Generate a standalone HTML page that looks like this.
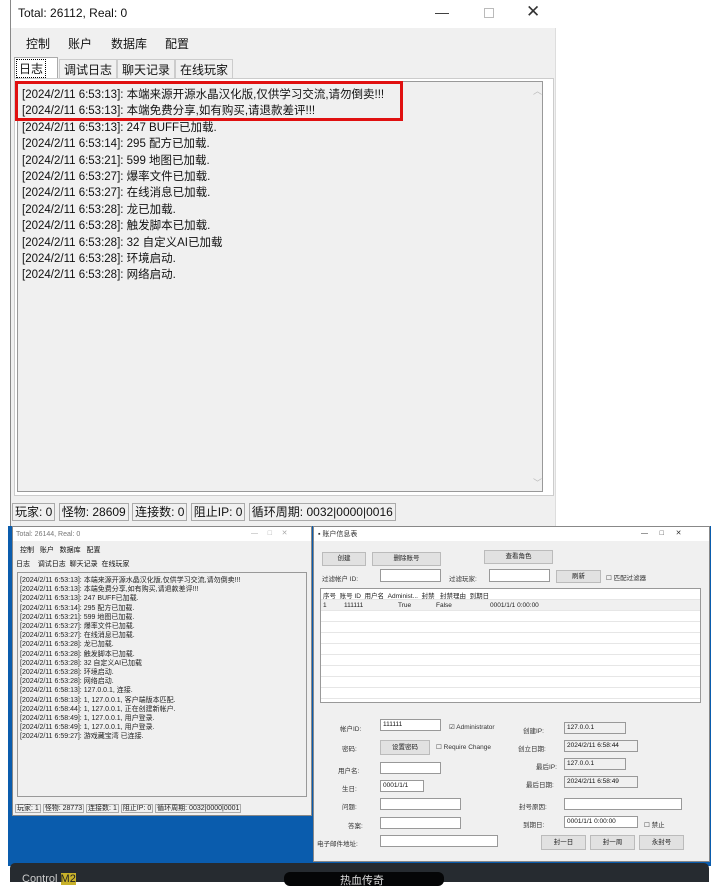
<!DOCTYPE html>
<html><head><meta charset="utf-8"><style>
*{margin:0;padding:0;box-sizing:border-box}
body{width:724px;height:882px;background:#fff;position:relative;overflow:hidden;font-family:"Liberation Sans","Noto Sans CJK SC",sans-serif;color:#111}
.a{position:absolute}
.log{font-size:11.5px;line-height:16.4px;white-space:nowrap}
.s{font-size:7px;line-height:9.2px;white-space:nowrap}
.box{position:absolute;background:#fff;border:1px solid #aaa}
.btn{position:absolute;background:#e1e1e1;border:1px solid #bbb;font-size:6.5px;text-align:center;color:#222}
.lbl{position:absolute;font-size:6.5px;color:#333;white-space:nowrap}
.inp{position:absolute;background:#fff;border:1px solid #999;font-size:6.5px;padding-left:2px;line-height:10px}
.ro{background:#f0f0f0}
</style></head><body>
<div class="a" style="left:10px;top:0;width:546px;height:526px;background:#f0f0f0;border-left:1px solid #888;border-right:1px solid #ddd">
 <div class="a" style="left:0;top:0;width:545px;height:28px;background:#fff"></div>
 <div class="a" style="left:7px;top:6px;font-size:12px">Total: 26112, Real: 0</div>
 <div class="a" style="left:424px;top:4px;font-size:14px;color:#333">—</div>
 <div class="a" style="left:473px;top:8px;width:10px;height:10px;border:1px solid #bbb"></div>
 <div class="a" style="left:515px;top:2px;font-size:17px;color:#333">✕</div>
 <div class="a" style="left:15px;top:35px;font-size:12px">控制</div>
 <div class="a" style="left:57px;top:35px;font-size:12px">账户</div>
 <div class="a" style="left:100px;top:35px;font-size:12px">数据库</div>
 <div class="a" style="left:154px;top:35px;font-size:12px">配置</div>
 <div class="a" style="left:3px;top:57px;width:44px;height:21px;background:#fff;border:1px solid #aaa;border-bottom:none"></div>
 <div class="a" style="left:5px;top:59px;font-size:12px;border:1px dotted #000;padding:0 2px">日志</div>
 <div class="a" style="left:48px;top:59px;height:20px;border:1px solid #ccc;font-size:12px;padding:1px 4px">调试日志</div>
 <div class="a" style="left:106px;top:59px;height:20px;border:1px solid #ccc;font-size:12px;padding:1px 4px">聊天记录</div>
 <div class="a" style="left:164px;top:59px;height:20px;border:1px solid #ccc;font-size:12px;padding:1px 4px">在线玩家</div>
 <div class="a" style="left:3px;top:78px;width:540px;height:418px;background:#fff;border:1px solid #ccc"></div>
 <div class="a" style="left:6px;top:81px;width:526px;height:411px;background:#f0f0f0;border:1px solid #999"></div>
 <div class="a" style="left:522px;top:84px;font-size:9px;color:#bbb">︿</div>
 <div class="a" style="left:522px;top:476px;font-size:9px;color:#bbb">﹀</div>
 <div class="a log" style="left:11px;top:87px">[2024/2/11 6:53:13]: 本端来源开源水晶汉化版,仅供学习交流,请勿倒卖!!!<br>[2024/2/11 6:53:13]: 本端免费分享,如有购买,请退款差评!!!<br>[2024/2/11 6:53:13]: 247 BUFF已加载.<br>[2024/2/11 6:53:14]: 295 配方已加载.<br>[2024/2/11 6:53:21]: 599 地图已加载.<br>[2024/2/11 6:53:27]: 爆率文件已加载.<br>[2024/2/11 6:53:27]: 在线消息已加载.<br>[2024/2/11 6:53:28]: 龙已加载.<br>[2024/2/11 6:53:28]: 触发脚本已加载.<br>[2024/2/11 6:53:28]: 32 自定义AI已加载<br>[2024/2/11 6:53:28]: 环境启动.<br>[2024/2/11 6:53:28]: 网络启动.</div>
 <div class="a" style="left:4px;top:81px;width:388px;height:40px;border:3px solid #e01010"></div>
 <div class="a" style="left:1px;top:503px;font-size:12px;white-space:nowrap">
  <span style="border:1px solid #aaa;padding:1px 2px">玩家: 0</span> <span style="border:1px solid #aaa;padding:1px 2px">怪物: 28609</span> <span style="border:1px solid #aaa;padding:1px 2px">连接数: 0</span> <span style="border:1px solid #aaa;padding:1px 2px">阻止IP: 0</span> <span style="border:1px solid #aaa;padding:1px 2px">循环周期: 0032|0000|0016</span></div>
</div>
<div class="a" style="left:8px;top:526px;width:703px;height:340px;background:#0a5cad"></div>
<div class="a" style="left:10px;top:863px;width:699px;height:19px;background:#262b30;border-radius:5px 5px 0 0"></div>
<div class="a" style="left:284px;top:872px;width:160px;height:14px;background:#050607;border-radius:6px"></div>
<div class="a" style="left:340px;top:872px;font-size:11px;color:#ddd">热血传奇</div>
<div class="a" style="left:22px;top:873px;font-size:11px;color:#ccc">Control <span style="background:#c9b22a;color:#222">M2</span></div>
<div class="a" style="left:12px;top:526px;width:300px;height:290px;background:#f0f0f0;border:1px solid #888">
 <div class="a" style="left:0;top:0;width:298px;height:14px;background:#fff"></div>
 <div class="a s" style="left:3px;top:3px;color:#777">Total: 26144, Real: 0</div>
 <div class="a s" style="left:238px;top:2px;color:#aaa">—&nbsp;&nbsp;&nbsp;&nbsp;&nbsp;□&nbsp;&nbsp;&nbsp;&nbsp;&nbsp;✕</div>
 <div class="a s" style="left:7px;top:19px">控制&nbsp;&nbsp;&nbsp;账户&nbsp;&nbsp;&nbsp;数据库&nbsp;&nbsp;&nbsp;配置</div>
 <div class="a s" style="left:3px;top:33px">日志&nbsp;&nbsp;&nbsp;&nbsp;调试日志&nbsp;&nbsp;聊天记录&nbsp;&nbsp;在线玩家</div>
 <div class="a" style="left:4px;top:45px;width:290px;height:225px;background:#f0f0f0;border:1px solid #999"></div>
 <div class="a s" style="left:7px;top:49px;color:#222">[2024/2/11 6:53:13]: 本端来源开源水晶汉化版,仅供学习交流,请勿倒卖!!!<br>[2024/2/11 6:53:13]: 本端免费分享,如有购买,请退款差评!!!<br>[2024/2/11 6:53:13]: 247 BUFF已加载.<br>[2024/2/11 6:53:14]: 295 配方已加载.<br>[2024/2/11 6:53:21]: 599 地图已加载.<br>[2024/2/11 6:53:27]: 爆率文件已加载.<br>[2024/2/11 6:53:27]: 在线消息已加载.<br>[2024/2/11 6:53:28]: 龙已加载.<br>[2024/2/11 6:53:28]: 触发脚本已加载.<br>[2024/2/11 6:53:28]: 32 自定义AI已加载<br>[2024/2/11 6:53:28]: 环境启动.<br>[2024/2/11 6:53:28]: 网络启动.<br>[2024/2/11 6:58:13]: 127.0.0.1, 连接.<br>[2024/2/11 6:58:13]: 1, 127.0.0.1, 客户端版本匹配.<br>[2024/2/11 6:58:44]: 1, 127.0.0.1, 正在创建新帐户.<br>[2024/2/11 6:58:49]: 1, 127.0.0.1, 用户登录.<br>[2024/2/11 6:58:49]: 1, 127.0.0.1, 用户登录.<br>[2024/2/11 6:59:27]: 游戏藏宝湾 已连接.</div>
 <div class="a s" style="left:2px;top:277px;color:#222"><span style="border:1px solid #aaa;padding:0 1px">玩家: 1</span> <span style="border:1px solid #aaa;padding:0 1px">怪物: 28773</span> <span style="border:1px solid #aaa;padding:0 1px">连接数: 1</span> <span style="border:1px solid #aaa;padding:0 1px">阻止IP: 0</span> <span style="border:1px solid #aaa;padding:0 1px">循环周期: 0032|0000|0001</span></div>
</div>
<div class="a" style="left:313px;top:526px;width:397px;height:336px;background:#f0f0f0;border:1px solid #888">
 <div class="a" style="left:0;top:0;width:395px;height:14px;background:#fff"></div>
 <div class="a s" style="left:4px;top:3px;color:#333">▪ 账户信息表</div>
 <div class="a s" style="left:327px;top:2px;color:#333">—&nbsp;&nbsp;&nbsp;&nbsp;&nbsp;&nbsp;□&nbsp;&nbsp;&nbsp;&nbsp;&nbsp;&nbsp;✕</div>
 <div class="btn" style="left:8px;top:25px;width:44px;height:14px;line-height:12px">创建</div>
 <div class="btn" style="left:58px;top:25px;width:69px;height:14px;line-height:12px">删除账号</div>
 <div class="btn" style="left:170px;top:23px;width:69px;height:14px;line-height:12px">查看角色</div>
 <div class="lbl" style="left:8px;top:46px">过滤帐户 ID:</div>
 <div class="inp" style="left:66px;top:42px;width:61px;height:13px"></div>
 <div class="lbl" style="left:135px;top:46px">过滤玩家:</div>
 <div class="inp" style="left:175px;top:42px;width:61px;height:13px"></div>
 <div class="btn" style="left:242px;top:43px;width:45px;height:13px;line-height:11px">刷新</div>
 <div class="lbl" style="left:292px;top:45px">☐ 匹配过滤器</div>
 <div class="a" style="left:6px;top:61px;width:381px;height:115px;background:#fff;border:1px solid #999;background-image:linear-gradient(#e6e6e6 1px,transparent 1px);background-size:100% 11px;background-position:0 10px"></div>
 <div class="a" style="left:7px;top:73px;width:379px;height:10px;background:#f0f0f0"></div>
 <div class="lbl" style="left:9px;top:63px;color:#222">序号&nbsp;&nbsp;账号 ID&nbsp;&nbsp;用户名&nbsp;&nbsp;Administ...&nbsp;&nbsp;封禁&nbsp;&nbsp;&nbsp;封禁理由&nbsp;&nbsp;到期日</div>
 <div class="lbl" style="left:9px;top:75px;color:#222">1</div>
 <div class="lbl" style="left:30px;top:75px;color:#222">111111</div>
 <div class="lbl" style="left:84px;top:75px;color:#222">True</div>
 <div class="lbl" style="left:122px;top:75px;color:#222">False</div>
 <div class="lbl" style="left:176px;top:75px;color:#222">0001/1/1 0:00:00</div>
 <div class="lbl" style="left:26px;top:196px">帐户ID:</div>
 <div class="inp" style="left:66px;top:192px;width:61px;height:12px">111111</div>
 <div class="lbl" style="left:135px;top:196px">☑ Administrator</div>
 <div class="lbl" style="left:209px;top:198px">创建IP:</div>
 <div class="inp ro" style="left:250px;top:195px;width:62px;height:12px">127.0.0.1</div>
 <div class="lbl" style="left:28px;top:216px">密码:</div>
 <div class="btn" style="left:66px;top:213px;width:50px;height:15px;line-height:13px">设置密码</div>
 <div class="lbl" style="left:122px;top:216px">☐ Require Change</div>
 <div class="lbl" style="left:204px;top:216px">创立日期:</div>
 <div class="inp ro" style="left:250px;top:213px;width:74px;height:12px">2024/2/11 6:58:44</div>
 <div class="lbl" style="left:24px;top:238px">用户名:</div>
 <div class="inp" style="left:66px;top:235px;width:61px;height:12px"></div>
 <div class="lbl" style="left:222px;top:234px">最后IP:</div>
 <div class="inp ro" style="left:250px;top:231px;width:62px;height:12px">127.0.0.1</div>
 <div class="lbl" style="left:28px;top:256px">生日:</div>
 <div class="inp" style="left:66px;top:253px;width:44px;height:12px">0001/1/1</div>
 <div class="lbl" style="left:212px;top:252px">最后日期:</div>
 <div class="inp ro" style="left:250px;top:249px;width:74px;height:12px">2024/2/11 6:58:49</div>
 <div class="lbl" style="left:28px;top:274px">问题:</div>
 <div class="inp" style="left:66px;top:271px;width:81px;height:12px"></div>
 <div class="lbl" style="left:205px;top:274px">封号原因:</div>
 <div class="inp" style="left:250px;top:271px;width:118px;height:12px"></div>
 <div class="lbl" style="left:34px;top:293px">答案:</div>
 <div class="inp" style="left:66px;top:290px;width:81px;height:12px"></div>
 <div class="lbl" style="left:209px;top:292px">到期日:</div>
 <div class="inp" style="left:250px;top:289px;width:74px;height:12px">0001/1/1 0:00:00</div>
 <div class="lbl" style="left:330px;top:292px">☐ 禁止</div>
 <div class="lbl" style="left:3px;top:311px">电子邮件地址:</div>
 <div class="inp" style="left:66px;top:308px;width:118px;height:12px"></div>
 <div class="btn" style="left:227px;top:308px;width:45px;height:15px;line-height:13px">封一日</div>
 <div class="btn" style="left:276px;top:308px;width:45px;height:15px;line-height:13px">封一周</div>
 <div class="btn" style="left:325px;top:308px;width:45px;height:15px;line-height:13px">永封号</div>
</div>
</body></html>
